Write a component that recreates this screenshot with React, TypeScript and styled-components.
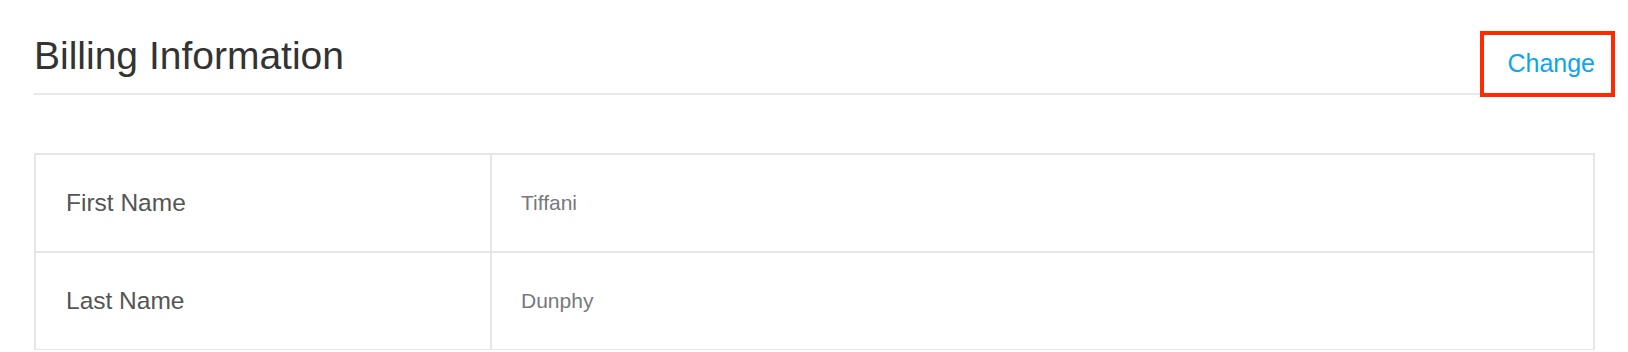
import styled, { createGlobalStyle } from "styled-components";

const GlobalStyle = createGlobalStyle`
  html, body {
    margin: 0;
    padding: 0;
    background: #ffffff;
  }
  body {
    font-family: "Liberation Sans", Arial, Helvetica, sans-serif;
  }
`;

const Page = styled.div`
  padding: 34px 33px 0 34px;
`;

const Header = styled.div`
  display: flex;
  justify-content: space-between;
  align-items: flex-end;
  padding-bottom: 15px;
  border-bottom: 2px solid #e8e8e8;
`;

const Title = styled.h2`
  margin: 0;
  font-size: 39px;
  font-weight: 400;
  color: #333333;
  line-height: normal;
`;

const ChangeLink = styled.a`
  position: relative;
  font-size: 25px;
  color: #0aa6f2;
  text-decoration: none;
  line-height: normal;
  cursor: pointer;

  /* highlight annotation drawn around the link */
  &::after {
    content: "";
    position: absolute;
    left: -27px;
    right: -20px;
    top: -18px;
    bottom: -19px;
    border: 4px solid #ff2a00;
    pointer-events: none;
  }
`;

const InfoTable = styled.div`
  margin-top: 58px;
  border: 2px solid #e6e6e6;
  border-bottom-width: 1px;
`;

const Row = styled.div`
  display: grid;
  grid-template-columns: 454px 1fr;
  height: 96px;
  & + & {
    border-top: 2px solid #e6e6e6;
  }
`;

const Cell = styled.div<{ $value?: boolean }>`
  display: flex;
  align-items: center;
  padding-left: ${(p) => (p.$value ? "29px" : "30px")};
  font-size: ${(p) => (p.$value ? "21px" : "24.5px")};
  color: ${(p) => (p.$value ? "#78787d" : "#555555")};
  border-left: ${(p) => (p.$value ? "2px solid #e6e6e6" : "none")};
`;

const fields: [string, string][] = [
  ["First Name", "Tiffani"],
  ["Last Name", "Dunphy"],
];

export default function App() {
  return (
    <>
      <GlobalStyle />
      <Page>
        <Header>
          <Title>Billing Information</Title>
          <ChangeLink>Change</ChangeLink>
        </Header>
        <InfoTable>
          {fields.map(([label, value]) => (
            <Row key={label}>
              <Cell>{label}</Cell>
              <Cell $value>{value}</Cell>
            </Row>
          ))}
        </InfoTable>
      </Page>
    </>
  );
}
